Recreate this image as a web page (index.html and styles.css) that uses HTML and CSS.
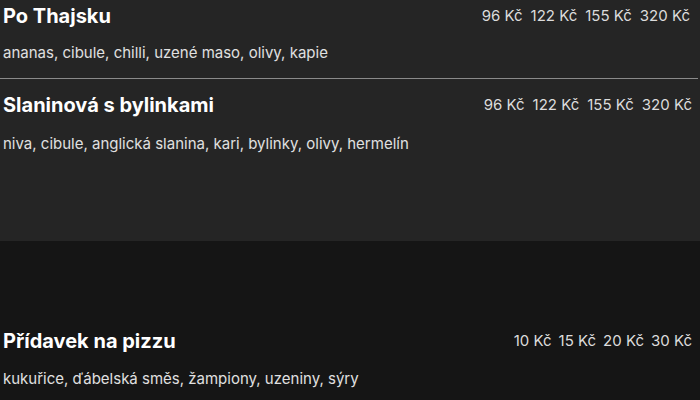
FILE: index.html
```html
<!DOCTYPE html>
<html lang="cs">
<head>
<meta charset="utf-8">
<link rel="stylesheet" href="styles.css">
</head>
<body>
<section class="menu menu-light">
  <div class="item item-bordered">
    <div class="item-head">
      <h3 class="item-title">Po Thajsku</h3>
      <div class="prices"><span>96 Kč</span><span>122 Kč</span><span>155 Kč</span><span>320 Kč</span></div>
    </div>
    <p class="item-desc">ananas, cibule, chilli, uzené maso, olivy, kapie</p>
  </div>
  <div class="item item-roomy">
    <div class="item-head">
      <h3 class="item-title">Slaninová s bylinkami</h3>
      <div class="prices"><span>96 Kč</span><span>122 Kč</span><span>155 Kč</span><span>320 Kč</span></div>
    </div>
    <p class="item-desc">niva, cibule, anglická slanina, kari, bylinky, olivy, hermelín</p>
  </div>
</section>
<section class="menu menu-dark">
  <div class="item item-extra">
    <div class="item-head">
      <h3 class="item-title">Přídavek na pizzu</h3>
      <div class="prices"><span>10 Kč</span><span>15 Kč</span><span>20 Kč</span><span>30 Kč</span></div>
    </div>
    <p class="item-desc">kukuřice, ďábelská směs, žampiony, uzeniny, sýry</p>
  </div>
</section>
</body>
</html>
```
FILE: styles.css
```css
html, body {
  margin: 0;
  padding: 0;
  background: #151515;
}
body {
  font-family: Inter, "Open Sans", sans-serif;
  color: #f2f2f2;
  width: 700px;
  height: 400px;
  overflow: hidden;
}
.menu-light {
  background: #252525;
  height: 241px;
  padding-top: 4px;
  box-sizing: border-box;
}
.menu-dark {
  background: #151515;
  padding-top: 88px;
}
.item {
  padding: 0 8px 0 3px;
}
.item-bordered {
  border-bottom: 1px solid #8a8a8a;
  padding-bottom: 15px;
  margin-right: 2px;
  margin-bottom: 14px;
}
.item-head {
  display: flex;
  justify-content: space-between;
  align-items: center;
  height: 24px;
}
.item-title {
  margin: 0;
  font-size: 20px;
  font-weight: 700;
  line-height: 24px;
  color: #ffffff;
}
.prices {
  display: flex;
  gap: 8px;
  font-size: 15px;
  color: #dcdcdc;
  margin-top: -2px;
}
.item-desc {
  margin: 15px 0 0;
  font-size: 15px;
  line-height: 20px;
  color: #e0e0e0;
}
.item-roomy .item-desc {
  margin-top: 17px;
}
.item-extra .item-desc {
  margin-top: 16px;
}
.item-extra .prices {
  gap: 7px;
}
```
